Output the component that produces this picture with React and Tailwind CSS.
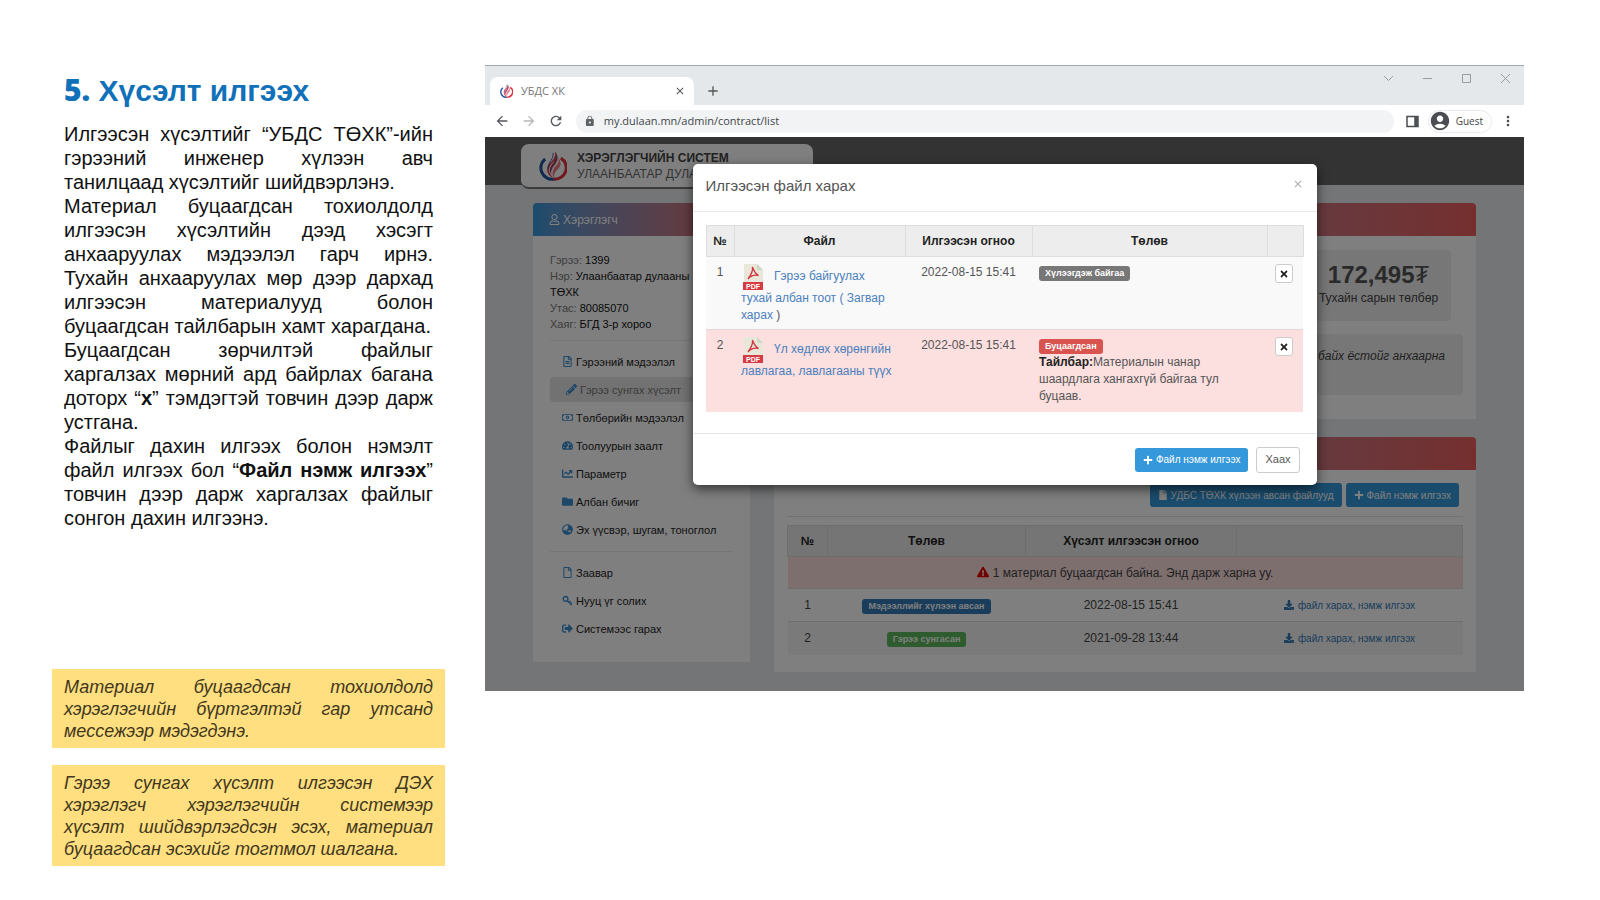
import {
  FaRegUser,
  FaPencilAlt,
  FaRegMoneyBillAlt,
  FaTachometerAlt,
  FaChartLine,
  FaFolder,
  FaGlobeAsia,
  FaRegFile,
  FaRegFileAlt,
  FaSignOutAlt,
  FaDownload,
  FaExclamationTriangle,
  FaPlus,
  FaTimes,
  FaFile,
} from "react-icons/fa";
import { MdArrowBack, MdArrowForward, MdRefresh, MdLock, MdAccountCircle, MdMoreVert, MdClose, MdAdd } from "react-icons/md";

// Each entry is one justified line, `end` closes a paragraph
const guide = [
  { text: "Илгээсэн хүсэлтийг “УБДС ТӨХК”-ийн" },
  { text: "гэрээний инженер хүлээн авч" },
  { text: "танилцаад хүсэлтийг шийдвэрлэнэ.", end: true },
  { text: "Материал буцаагдсан тохиолдолд" },
  { text: "илгээсэн хүсэлтийн дээд хэсэгт" },
  { text: "анхааруулах мэдээлэл гарч ирнэ." },
  { text: "Тухайн анхааруулах мөр дээр дархад" },
  { text: "илгээсэн материалууд болон" },
  { text: "буцаагдсан тайлбарын хамт харагдана.", end: true },
  { text: "Буцаагдсан зөрчилтэй файлыг" },
  { text: "харгалзах мөрний ард байрлах багана" },
  { text: <>доторх “<b>х</b>” тэмдэгтэй товчин дээр дарж</> },
  { text: "устгана.", end: true },
  { text: "Файлыг дахин илгээх болон нэмэлт" },
  { text: <>файл илгээх бол “<b>Файл нэмж илгээх</b>”</> },
  { text: "товчин дээр дарж харгалзах файлыг" },
  { text: "сонгон дахин илгээнэ.", end: true },
];

const notes = [
  [
    { text: "Материал буцаагдсан тохиолдолд" },
    { text: "хэрэглэгчийн бүртгэлтэй гар утсанд" },
    { text: "мессежээр мэдэгдэнэ.", end: true },
  ],
  [
    { text: "Гэрээ сунгах хүсэлт илгээсэн ДЭХ" },
    { text: "хэрэглэгч хэрэглэгчийн системээр" },
    { text: "хүсэлт шийдвэрлэгдсэн эсэх, материал" },
    { text: "буцаагдсан эсэхийг тогтмол шалгана.", end: true },
  ],
];

const customer = [
  { label: "Гэрээ:", value: "1399" },
  { label: "Нэр:", value: "Улаанбаатар дулааны ТӨХК" },
  { label: "Утас:", value: "80085070" },
  { label: "Хаяг:", value: "БГД 3-р хороо" },
];

const KeyIcon = ({ className }) => (
  <svg viewBox="0 0 14 14" className={className} fill="none" stroke="currentColor" aria-hidden="true">
    <circle cx="4.500" cy="5" r="3" strokeWidth="1.800" />
    <path d="M6.500 7L12.500 13M9 9.500L10.800 7.700M11 11.500L12.800 9.700" strokeWidth="1.600" />
  </svg>
);

const menu = [
  { icon: FaRegFileAlt, label: "Гэрээний мэдээлэл" },
  { icon: FaPencilAlt, label: "Гэрээ сунгах хүсэлт", active: true },
  { icon: FaRegMoneyBillAlt, label: "Төлбөрийн мэдээлэл" },
  { icon: FaTachometerAlt, label: "Тоолуурын заалт" },
  { icon: FaChartLine, label: "Параметр" },
  { icon: FaFolder, label: "Албан бичиг" },
  { icon: FaGlobeAsia, label: "Эх үүсвэр, шугам, тоноглол" },
];

const accountMenu = [
  { icon: FaRegFile, label: "Заавар" },
  { icon: KeyIcon, label: "Нууц үг солих" },
  { icon: FaSignOutAlt, label: "Системээс гарах" },
];

const requests = [
  { status: "Мэдээллийг хүлээн авсан", color: "bg-[#337ab7]", date: "2022-08-15 15:41" },
  { status: "Гэрээ сунгасан", color: "bg-[#5cb85c]", date: "2021-09-28 13:44" },
];

const Lines = ({ items }) =>
  items.map((line, i) => (
    <span
      key={i}
      className={`block whitespace-nowrap ${line.end ? "" : "[text-align-last:justify]"}`}
    >
      {line.text}
    </span>
  ));

const Logo = ({ className }) => (
  <svg viewBox="0 0 32 34" className={className} fill="none" aria-hidden="true">
    <path d="M7 9A13 13 0 0 0 17 32" stroke="#24559c" strokeWidth="3.500" />
    <path d="M25 8A13 13 0 0 1 17 32" stroke="#e0303a" strokeWidth="3.500" />
    <path d="M16 31C7 26 8 17 14 12C18 8 19 5 18 0C24 7 21 12 17 17C13 22 13 26 16 31Z" fill="#e0404a" />
    <path d="M16 30C9 23 12 17 17 12" stroke="#fff" />
    <path d="M10 20C11 11 17 10 16 2M13 24C13 16 21 13 20 5" stroke="#24559c" strokeWidth="1" />
    <path d="M17 31C14 25 16 20 20 16C23 13 23 11 22 7C27 15 24 18 21 21C18 24 17 27 17 31Z" fill="#f07a80" />
  </svg>
);

const PdfIcon = () => (
  <svg viewBox="0 0 22 26" className="mr-[10px] ml-px inline-block h-[26px] w-[22px]" aria-hidden="true">
    <path d="M2 0H15L21 6V18H2Z" fill="#e9e7da" />
    <path d="M15 0L21 6H15Z" fill="#cfd8c4" />
    <path
      d="M10.500 3C11.800 6 12 9 16.500 11.500C12 10.500 9 11.500 6 15C9 11 11 7 10.500 3Z"
      fill="none"
      stroke="#d0393f"
      strokeWidth="1.300"
    />
    <rect x="1" y="18" width="20" height="8" fill="#d63a42" />
    <text x="11" y="25" textAnchor="middle" fontSize="7" fontWeight="700" fontFamily="Liberation Sans" fill="#fff">
      PDF
    </text>
  </svg>
);

const Badge = ({ color, children }) => (
  <span className={`inline-block rounded-[3px] px-[6px] text-[9px] leading-[15px] font-bold text-white ${color}`}>
    {children}
  </span>
);

const MenuItem = ({ item }) => {
  const Icon = item.icon;
  return (
    <li>
      <a
        href="#"
        className={`flex h-[25px] items-center gap-[3px] rounded ${
          item.active ? "bg-[#e4e4e4] pl-4 text-[#777]" : "pl-3 text-[#222]"
        }`}
      >
        <Icon className="h-[11px] w-auto text-[#3a8fd0]" />
        {item.label}
      </a>
    </li>
  );
};

const BrowserBar = () => (
  <header className="border-t border-[#a3a8ac] font-['Open_Sans','Noto_Sans',sans-serif]">
    <div className="flex h-[39px] items-end bg-[#e5e8eb]">
      <div className="ml-[5px] flex h-[28px] w-[204px] items-center rounded-t-lg bg-white pr-2 pl-[10px] text-[11px] text-[#777]">
        <Logo className="mr-2 h-[14px] w-[13px]" />
        УБДС ХК
        <button type="button" aria-label="Close tab" className="ml-auto">
          <MdClose className="size-3 text-[#555]" />
        </button>
      </div>
      <button type="button" aria-label="New tab" className="mb-[6px] ml-[11px]">
        <MdAdd className="size-4 text-[#555]" />
      </button>
      <div className="mr-[13px] mb-[21px] ml-auto flex items-center gap-7 text-[#9a9da0]">
        <svg viewBox="0 0 11 11" className="size-[11px]" fill="none" stroke="currentColor">
          <path d="M1 3L5.500 7.500L10 3" />
        </svg>
        <svg viewBox="0 0 11 11" className="size-[11px]" fill="none" stroke="currentColor">
          <path d="M1 5.500H10" />
        </svg>
        <svg viewBox="0 0 11 11" className="size-[11px]" fill="none" stroke="currentColor">
          <path d="M1.500 1.500H9.500V9.500H1.500Z" />
        </svg>
        <svg viewBox="0 0 11 11" className="size-[11px]" fill="none" stroke="currentColor">
          <path d="M1 1L10 10M10 1L1 10" />
        </svg>
      </div>
    </div>
    <div className="flex h-8 items-center bg-white pr-2 pl-[9px]">
      <div className="flex gap-[11px] text-[#55585c]">
        <button type="button" aria-label="Back"><MdArrowBack className="size-4" /></button>
        <button type="button" aria-label="Forward"><MdArrowForward className="size-4 text-[#b5b7b9]" /></button>
        <button type="button" aria-label="Reload"><MdRefresh className="size-4" /></button>
      </div>
      <label className="ml-3 flex h-[23px] flex-1 items-center gap-2 rounded-full bg-[#f1f3f4] pl-2">
        <MdLock className="size-3 text-[#5f6368]" />
        <input
          type="text"
          aria-label="Address"
          defaultValue="my.dulaan.mn/admin/contract/list"
          className="w-full bg-transparent text-[11px] text-[#44474a] outline-none"
        />
      </label>
      <svg viewBox="0 0 13 13" className="ml-3 size-[13px]" fill="none" stroke="#4a4d51">
        <path d="M1 1.500H12V11.500H1Z" strokeWidth="1.500" />
        <path d="M10 2V11" strokeWidth="3.500" />
      </svg>
      <button
        type="button"
        className="ml-[9px] flex h-[23px] items-center gap-[5px] rounded-full border border-[#e8eaed] pr-2 text-[10px] text-[#444]"
      >
        <MdAccountCircle className="size-[22px] text-[#4a4d51]" />
        Guest
      </button>
      <button type="button" aria-label="Menu" className="ml-2"><MdMoreVert className="size-4 text-[#4a4d51]" /></button>
    </div>
  </header>
);

const Sidebar = () => (
  <aside className="w-[217px] shrink-0 self-start rounded-t bg-white pb-[21px] text-[11px] leading-4">
    <h2 className="flex h-[33px] items-center gap-[3px] rounded-t bg-linear-to-r from-[#3498db] to-[#e85a5a] pl-4 text-xs text-white">
      <FaRegUser className="size-[11px]" />
      Хэрэглэгч
    </h2>
    <div className="px-[17px] pt-4">
      {customer.map((row) => (
        <p key={row.label} className="w-[145px] text-[#777]">
          {row.label} <span className="text-[#111]">{row.value}</span>
        </p>
      ))}
      <ul className="mt-2 flex flex-col gap-[3px] border-t border-[#ececec] pt-2">
        {menu.map((item) => (
          <MenuItem key={item.label} item={item} />
        ))}
      </ul>
      <ul className="mt-[9px] flex flex-col gap-[3px] border-t border-[#ececec] pt-2">
        {accountMenu.map((item) => (
          <MenuItem key={item.label} item={item} />
        ))}
      </ul>
    </div>
  </aside>
);

const RequestTable = () => (
  <table className="mt-2 w-full table-fixed border-collapse text-center text-xs text-[#444]">
    <thead>
      <tr className="h-[31px] border border-[#ddd] bg-[#ebebeb] text-[#222]">
        <th className="w-[40px] border-r border-[#ddd]">№</th>
        <th className="w-[198px] border-r border-[#ddd]">Төлөв</th>
        <th className="w-[211px] border-r border-[#ddd]">Хүсэлт илгээсэн огноо</th>
        <th></th>
      </tr>
    </thead>
    <tbody>
      <tr className="h-8 bg-[#fcdede]">
        <td colSpan={4}>
          <FaExclamationTriangle className="mr-1 inline size-3 align-[-1px] text-[#e00000]" />
          1 материал буцаагдсан байна. Энд дарж харна уу.
        </td>
      </tr>
      {requests.map((row, i) => (
        <tr key={row.date} className="h-[33px] border-t border-[#ddd] even:bg-white odd:bg-[#f5f5f5]">
          <td>{i + 1}</td>
          <td><Badge color={row.color}>{row.status}</Badge></td>
          <td>{row.date}</td>
          <td>
            <a href="#" className="text-[10px] text-[#337ab7]">
              <FaDownload className="mr-1 inline size-[10px] align-[-1px]" />
              файл харах, нэмж илгээх
            </a>
          </td>
        </tr>
      ))}
    </tbody>
  </table>
);

const Portal = () => (
  <div className="bg-[#e8eaed] pb-[19px]">
    <nav className="h-12 bg-[#666] px-9 pt-[7px]">
      <div className="flex h-[45px] w-[292px] items-center gap-[10px] rounded-lg border-b-2 border-[#777] bg-white pl-[18px] leading-[17px] whitespace-nowrap text-[#666]">
        <Logo className="h-8 w-7 shrink-0" />
        <p className="overflow-hidden text-xs">
          <strong className="text-[#444]">ХЭРЭГЛЭГЧИЙН СИСТЕМ</strong>
          <br />
          УЛААНБААТАР ДУЛААНЫ СҮЛЖЭЭ
        </p>
      </div>
    </nav>

    <div className="flex gap-6 px-12 pt-[18px]">
      <Sidebar />
      <main className="flex min-w-0 flex-1 flex-col gap-[18px]">
        {/* Payment summary */}
        <section className="h-[216px] rounded-t bg-white">
          <div className="h-[33px] rounded-t bg-linear-to-r from-[#3498db] to-[#eb5e5e]" />
          <div className="px-[13px] pt-[14px] text-[#444]">
            <div className="mr-3 ml-auto w-[145px] rounded bg-[#eee] pt-3 pb-[13px] text-center">
              <p className="text-[24px] leading-[26px] font-bold text-[#555]">
                172,495<span className="font-normal">₮</span>
              </p>
              <p className="text-xs leading-5">Тухайн сарын төлбөр</p>
            </div>
            <p className="mt-[13px] h-[61px] rounded bg-[#eee] pt-[14px] pr-[18px] text-right text-xs italic">
              байх ёстойг анхаарна
            </p>
          </div>
        </section>

        {/* Requests */}
        <section className="rounded-t bg-white pb-[17px]">
          <div className="h-[33px] rounded-t bg-linear-to-r from-[#3498db] to-[#eb5e5e]" />
          <div className="px-[13px] pt-[13px]">
            <div className="flex justify-end gap-1 border-b border-[#e5e5e5] pr-1 pb-[9px] text-[10px] text-white">
              <button type="button" className="flex h-6 items-center gap-[3px] rounded-[3px] bg-[#3498db] px-2">
                <FaFile className="size-[10px]" />
                УДБС ТӨХК хүлээн авсан файлууд
              </button>
              <button type="button" className="flex h-6 items-center gap-[3px] rounded-[3px] bg-[#3498db] px-2">
                <FaPlus className="size-[10px]" />
                Файл нэмж илгээх
              </button>
            </div>
            <RequestTable />
          </div>
        </section>
      </main>
    </div>
  </div>
);

const DeleteButton = () => (
  <button
    type="button"
    aria-label="Устгах"
    className="flex h-[19px] w-[18px] items-center justify-center rounded-[3px] border border-[#ccc] bg-white"
  >
    <FaTimes className="size-[10px] text-[#222]" />
  </button>
);

const FileModal = () => (
  <div
    role="dialog"
    aria-label="Илгээсэн файл харах"
    className="w-[624px] rounded-[5px] bg-white shadow-[0_4px_12px_rgba(0,0,0,0.6)]"
  >
    <div className="flex h-12 items-center justify-between border-b border-[#e8e8e8] px-[13px] pb-[3px]">
      <h2 className="text-[15px] text-[#555]">Илгээсэн файл харах</h2>
      <button type="button" aria-label="Хаах" className="pb-1">
        <MdClose className="size-3 text-[#aaa]" />
      </button>
    </div>
    <div className="px-[13px] pt-[13px] pb-[21px]">
      <table className="w-full table-fixed border-collapse text-xs leading-[17px] text-[#555]">
        <thead>
          <tr className="h-[31px] border border-[#ddd] bg-[#ededed] text-[#222]">
            <th className="w-[28px] border-r border-[#ddd]">№</th>
            <th className="w-[171px] border-r border-[#ddd]">Файл</th>
            <th className="w-[127px] border-r border-[#ddd]">Илгээсэн огноо</th>
            <th className="w-[235px] border-r border-[#ddd]">Төлөв</th>
            <th></th>
          </tr>
        </thead>
        <tbody className="align-top">
          <tr className="h-[73px] bg-[#f9f9f9] [&>td]:pt-[7px]">
            <td className="text-center">1</td>
            <td className="px-[7px]">
              <a href="#" className="text-[#4a80bd]">
                <PdfIcon />
                Гэрээ байгуулах
                <br />
                тухай албан тоот ( Загвар
                <br />
                харах
              </a>{" "}
              )
            </td>
            <td className="text-center">2022-08-15 15:41</td>
            <td className="px-[7px]"><Badge color="bg-[#777]">Хүлээгдэж байгаа</Badge></td>
            <td className="pl-2"><DeleteButton /></td>
          </tr>
          <tr className="h-[82px] border-t border-[#e5d5d5] bg-[#fcdfdf] [&>td]:pt-[7px]">
            <td className="text-center">2</td>
            <td className="px-[7px]">
              <a href="#" className="text-[#4a80bd]">
                <PdfIcon />
                Үл хөдлөх хөрөнгийн
                <br />
                лавлагаа, лавлагааны түүх
              </a>
            </td>
            <td className="text-center">2022-08-15 15:41</td>
            <td className="px-[7px]">
              <Badge color="bg-[#d9534f]">Буцаагдсан</Badge>
              <p className="w-[190px]">
                <b className="text-[#222]">Тайлбар:</b>Материалын чанар шаардлага хангахгүй байгаа тул буцаав.
              </p>
            </td>
            <td className="pl-2"><DeleteButton /></td>
          </tr>
        </tbody>
      </table>
    </div>
    <div className="flex items-center justify-end gap-2 border-t border-[#e8e8e8] px-[17px] pt-[13px] pb-3">
      <button
        type="button"
        className="flex h-6 items-center gap-[3px] rounded-[3px] bg-[#3498db] px-2 text-[10px] text-white"
      >
        <FaPlus className="size-[10px]" />
        Файл нэмж илгээх
      </button>
      <button type="button" className="h-[26px] rounded-[3px] border border-[#ccc] px-2 text-[11px] text-[#555]">
        Хаах
      </button>
    </div>
  </div>
);

const App = () => {
  return (
    <div className="flex min-h-screen items-start gap-10 bg-white pt-[65px] pr-[76px] pb-8 pl-[52px] font-['Liberation_Sans',Arial,sans-serif]">
      <article className="w-[393px] shrink-0 text-[#111]">
        <div className="h-[604px] px-3 pt-[7px]">
          <h1 className="text-[30px] leading-9 font-bold text-[#1070b8]">
            <span className="font-['Open_Sans',sans-serif] font-extrabold">5.</span> Хүсэлт илгээх
          </h1>
          <p className="mt-[13px] text-[20px] leading-6">
            <Lines items={guide} />
          </p>
        </div>
        <div className="flex flex-col gap-[17px]">
          {notes.map((note, i) => (
            <p key={i} className="bg-[#ffdf80] px-3 pt-[7px] pb-[6px] text-[18px] leading-[22px] text-[#42371c] italic">
              <Lines items={note} />
            </p>
          ))}
        </div>
      </article>

      <section className="min-w-0 flex-1">
        <BrowserBar />
        <div className="relative overflow-hidden">
          <Portal />
          <div className="absolute inset-0 flex items-start justify-center bg-black/50 pt-[27px]">
            <FileModal />
          </div>
        </div>
      </section>
    </div>
  );
};

export default App;
